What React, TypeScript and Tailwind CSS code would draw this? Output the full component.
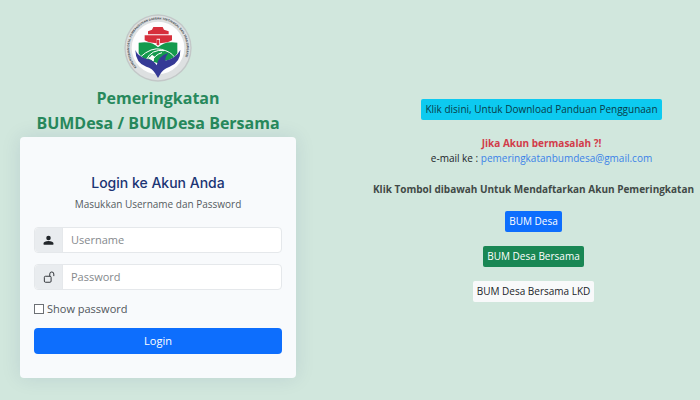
import { useState } from "react";
import type { ReactNode } from "react";

type FieldProps = {
  id: string;
  label: string;
  type: string;
  icon: ReactNode;
  value: string;
  onChange: (value: string) => void;
};

function PersonIcon() {
  return (
    <svg viewBox="0 0 16 16" className="size-[11px] fill-[#212529]" aria-hidden="true">
      <path d="M8 1.200a3.300 3.300 0 1 1 0 6.600 3.300 3.300 0 0 1 0-6.600ZM1.800 14.200c-.7 0-1.200-.5-1.200-1.200C.6 10.400 4 8.900 8 8.900s7.400 1.500 7.400 4.100c0 .7-.5 1.200-1.200 1.200Z" />
    </svg>
  );
}

function UnlockIcon() {
  return (
    <svg viewBox="0 0 16 16" className="size-3 fill-none stroke-[#212529]" strokeWidth="1.2" aria-hidden="true">
      <rect x="1.800" y="7" width="9" height="8" rx="1.500" />
      <path d="M9 7V4a2.700 2.700 0 0 1 5.400 0v2.800" />
    </svg>
  );
}

function Logo() {
  return (
    <svg viewBox="0 0 204 204" className="size-17" role="img" aria-label="Logo Kementerian Desa">
      <defs>
        <path id="ring" d="M38 160A86 86 0 1 1 166 160" />
      </defs>
      <circle cx="102" cy="102" r="101" fill="#c3c8c8" />
      <circle cx="102" cy="102" r="97" fill="#dde0e1" />
      <circle cx="102" cy="102" r="79" fill="#fdfdfe" />
      <text className="font-['Open_Sans',sans-serif] font-bold" fontSize="9" fill="#4a5054">
        <textPath href="#ring">KEMENTERIAN DESA, PEMBANGUNAN DAERAH TERTINGGAL DAN TRANSMIGRASI</textPath>
      </text>
      {/* house */}
      <path d="M88 39h28l4 8 14 5v9H72v-9l12-5Z" fill="#d62f3c" />
      <path d="M62 64h82v15l-13 6-23 3V74H98v14l-23-3-13-6Z" fill="#d62f3c" />
      <path d="M98 77h8v14l-4 4-4-4Z" fill="#d62f3c" />
      {/* fields */}
      <path d="M44 86q40-6 58 14 20-20 58-14v32q-12 20-36 22l-22 8-22-8q-24-2-36-22Z" fill="#149a4d" />
      <path
        d="M48 130q34-32 64-24t38 22M66 138q18-34 54-28M84 142q8-20 30-26"
        fill="none"
        stroke="#fff"
        strokeWidth="3"
      />
      {/* hands */}
      <path
        d="M34 108q8 20 32 26 24 4 32 20 4-28 36-38-12 14-10 24 30-5 45-32 1 38-32 50-22 8-28 22l-7 12-7-12q-10-18-28-22-32-10-33-50Z"
        fill="#353a96"
      />
      <path d="M70 132q10-2 14-10l8 6q-4 8-2 14Z" fill="#fdfdfe" />
    </svg>
  );
}

function Field({ id, label, type, icon, value, onChange }: FieldProps) {
  return (
    <div className="flex h-[26px] rounded-sm border border-[#e5e8eb] bg-white">
      <label
        htmlFor={id}
        aria-label={label}
        className="flex w-7 items-center justify-center rounded-l-sm border-r border-[#e5e8eb] bg-[#e9ecef]"
      >
        {icon}
      </label>
      <input
        id={id}
        type={type}
        placeholder={label}
        value={value}
        onChange={(e) => onChange(e.target.value)}
        className="min-w-0 flex-1 px-2 text-[11px] outline-none placeholder:text-[#85898d]"
      />
    </div>
  );
}

export default function App() {
  const [username, setUsername] = useState("");
  const [password, setPassword] = useState("");
  const [showPassword, setShowPassword] = useState(false);

  return (
    <div className="grid min-h-screen grid-cols-[9fr_11fr] bg-[#d1e7dd] font-['Open_Sans',sans-serif] text-[#212529]">
      <section className="flex flex-col items-center pt-[14px] pr-[19px] pl-5">
        <Logo />
        <h1 className="mt-1 pb-px text-center text-base leading-[25px] font-bold text-[#27895c]">
          Pemeringkatan
          <br />
          BUMDesa / BUMDesa Bersama
        </h1>
        <form
          onSubmit={(e) => e.preventDefault()}
          className="w-full rounded-sm bg-[#f8fafc] px-[14px] pt-9 pb-6 shadow-[0_0_20px_rgba(1,41,112,0.1)]"
        >
          <h2 className="text-center font-[Inter,sans-serif] text-sm leading-5 font-medium text-[#1b3474]">
            Login ke Akun Anda
          </h2>
          <p className="mt-1 mb-4 text-center text-[10px] leading-[14px] text-[#555a5f]">Masukkan Username dan Password</p>
          <div className="flex flex-col gap-[11px]">
            <Field
              id="username"
              label="Username"
              type="text"
              icon={<PersonIcon />}
              value={username}
              onChange={setUsername}
            />
            <Field
              id="password"
              label="Password"
              type={showPassword ? "text" : "password"}
              icon={<UnlockIcon />}
              value={password}
              onChange={setPassword}
            />
          </div>
          <label className="mt-3 flex items-center gap-[3px] text-[11px] leading-[14px] text-[#50565b]">
            <input
              type="checkbox"
              checked={showPassword}
              onChange={(e) => setShowPassword(e.target.checked)}
              className="size-[10px] appearance-none border border-[#6c7075] bg-white checked:bg-[#0d6efd]"
            />
            Show password
          </label>
          <button type="submit" className="mt-3 h-[26px] w-full rounded-sm bg-[#0d6efd] text-[11px] text-white">
            Login
          </button>
        </form>
      </section>

      <section className="flex flex-col items-center pt-[99px] pl-[52px] text-[10px] leading-[15px]">
        <div className="flex flex-col items-center pl-4">
          <a href="#panduan" className="rounded-xs bg-[#0dcaf0] px-1 py-[3px] text-[#083c4a]">
            Klik disini, Untuk Download Panduan Penggunaan
          </a>
          <p className="mt-4 font-bold text-[#d23c4a]">Jika Akun bermasalah ?!</p>
          <p>
            e-mail ke :{" "}
            <a href="mailto:pemeringkatanbumdesa@gmail.com" className="text-[#3b82e8]">
              pemeringkatanbumdesa@gmail.com
            </a>
          </p>
        </div>
        <p className="mt-4 mb-[14px] font-bold text-[#414a47]">Klik Tombol dibawah Untuk Mendaftarkan Akun Pemeringkatan</p>
        <div className="flex flex-col items-center gap-[14px]">
          <button type="button" className="rounded-xs bg-[#0d6efd] px-1 py-[3px] text-white">
            BUM Desa
          </button>
          <button type="button" className="rounded-xs bg-[#198754] px-1 py-[3px] text-white">
            BUM Desa Bersama
          </button>
          <button type="button" className="rounded-xs bg-[#f8f9fa] px-1 py-[3px]">
            BUM Desa Bersama LKD
          </button>
        </div>
      </section>
    </div>
  );
}
